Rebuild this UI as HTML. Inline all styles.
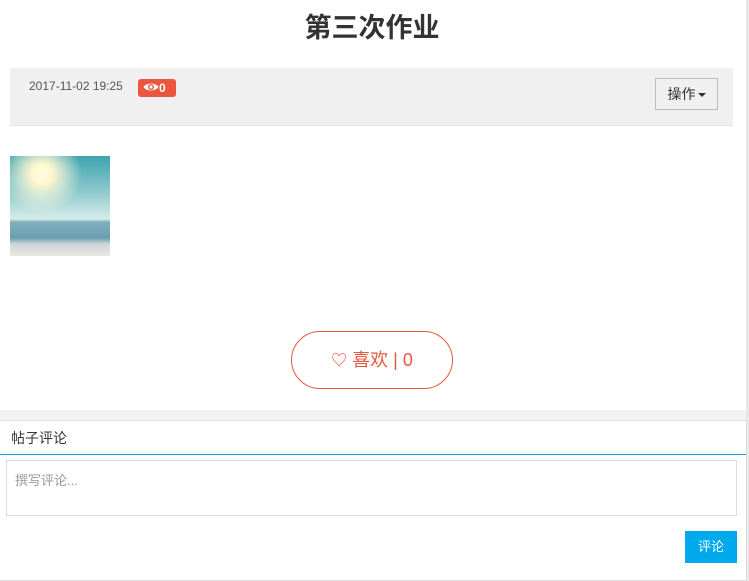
<!DOCTYPE html>
<html><head><meta charset="utf-8"><style>
*{box-sizing:border-box;margin:0;padding:0}
body{width:749px;height:581px;background:#fff;font-family:"Liberation Sans","Noto Sans CJK SC",sans-serif;position:relative;overflow:hidden}
.rb{position:absolute;left:746px;top:0;width:3px;height:581px;background:#e8e8e8}
h1{position:absolute;top:10px;left:0;width:744px;text-align:center;font-size:27px;font-weight:bold;color:#333;line-height:36px}
.meta{position:absolute;left:10px;top:68px;width:723px;height:58px;background:#f0f0f0;border-bottom:1px solid #e3e3e3}
.date{position:absolute;left:19px;top:11px;font-size:12px;color:#555}
.badge{position:absolute;left:128px;top:11px;width:38px;height:18px;background:#e9573f;border-radius:3px;color:#fff;font-size:12px;font-weight:bold;line-height:18px;padding-left:5px}
.op{position:absolute;left:645px;top:10px;width:63px;height:32px;border:1px solid #bbb;font-size:14px;color:#333;line-height:30px;text-align:center}
.caret{display:inline-block;width:0;height:0;border-left:4px solid transparent;border-right:4px solid transparent;border-top:4px solid #333;vertical-align:middle;margin-left:2px}
.img{position:absolute;left:10px;top:156px;width:100px;height:100px;background:
radial-gradient(circle at 32% 18%,#fffbe6 0,#fff7cc 10px,rgba(255,250,220,.6) 22px,rgba(255,255,255,0) 40px),
linear-gradient(180deg,#3ea3ae 0%,#8cc8cc 35%,#d8ecea 63%,#7fb0c0 66%,#6a9fb0 82%,#cfd6d8 88%,#e8e6e2 100%)}
.like{position:absolute;left:291px;top:331px;width:162px;height:58px;border:1px solid #e9573f;border-radius:29px;color:#e9573f;font-size:18px;line-height:56px;text-align:center}
.gray{position:absolute;left:0;top:410px;width:746px;height:10px;background:#f2f2f2}
.panel{position:absolute;left:0;top:420px;width:747px;height:161px;border:1px solid #ddd;border-left:none}
.ph{height:34px;border-bottom:1px solid #0e9ee0;font-size:14px;color:#333;line-height:34px;padding-left:11px}
.ta{position:absolute;left:6px;top:39px;width:731px;height:56px;border:1px solid #ddd;font-size:13px;color:#999;padding:9px 8px}
.btn{position:absolute;left:685px;top:110px;width:52px;height:32px;background:#00a8ec;color:#fff;font-size:13px;line-height:32px;text-align:center}
</style></head><body>
<div class="rb"></div>
<h1>第三次作业</h1>
<div class="meta">
<div class="date">2017-11-02 19:25</div>
<div class="badge"><svg width="16" height="12" viewBox="0 0 16 12" style="vertical-align:-1px"><path d="M0.5 6C3 1.5 13 1.5 15.5 6C13 10.5 3 10.5 0.5 6Z" fill="#fff"/><circle cx="8" cy="6" r="3" fill="#e9573f"/><circle cx="8" cy="6" r="1.6" fill="#fff"/></svg>0</div>
<div class="op">操作<span class="caret"></span></div>
</div>
<div class="img"></div>
<div class="like"><span style="font-size:16px">♡</span> 喜欢 | 0</div>
<div class="gray"></div>
<div class="panel">
<div class="ph">帖子评论</div>
<div class="ta">撰写评论...</div>
<div class="btn">评论</div>
</div>
</body></html>
